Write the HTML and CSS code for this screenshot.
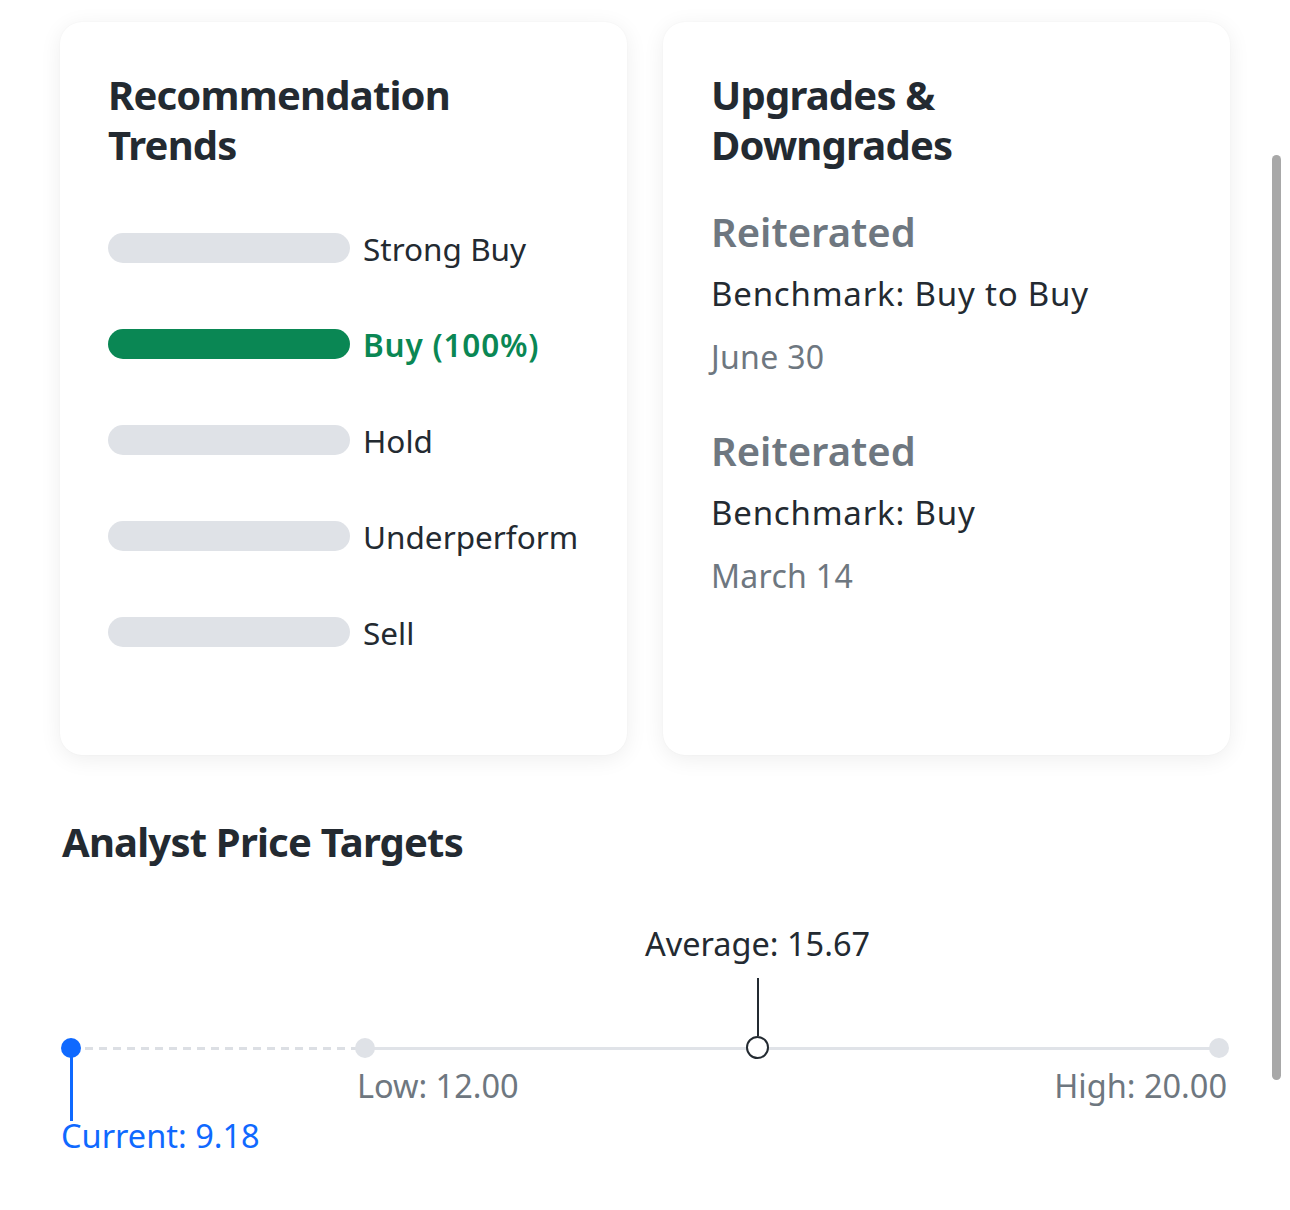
FILE: index.html
```html
<!DOCTYPE html>
<html lang="en">
<head>
  <meta charset="UTF-8">
  <title>Analyst Insights</title>
  <meta name="viewport" content="width=device-width, initial-scale=1.0">
  <link rel="stylesheet" href="styles.css">
</head>
<body>

<div class="page">

  <div class="cards">

    <!-- recommendation trends -->
    <section class="card">
      <h2 class="card-title">Recommendation<br>Trends</h2>

      <div class="trend-list">
        <div class="trend">
          <div class="bar"></div>
          <span class="trend-label">Strong Buy</span>
        </div>
        <div class="trend active">
          <div class="bar"></div>
          <span class="trend-label">Buy (100%)</span>
        </div>
        <div class="trend">
          <div class="bar"></div>
          <span class="trend-label">Hold</span>
        </div>
        <div class="trend">
          <div class="bar"></div>
          <span class="trend-label">Underperform</span>
        </div>
        <div class="trend">
          <div class="bar"></div>
          <span class="trend-label">Sell</span>
        </div>
      </div>
    </section>

    <!-- upgrades / downgrades -->
    <section class="card">
      <h2 class="card-title">Upgrades &amp;<br>Downgrades</h2>

      <div class="grade">
        <div class="grade-action">Reiterated</div>
        <div class="grade-firm">Benchmark: Buy to Buy</div>
        <div class="grade-date">June 30</div>
      </div>
      <div class="grade">
        <div class="grade-action">Reiterated</div>
        <div class="grade-firm">Benchmark: Buy</div>
        <div class="grade-date">March 14</div>
      </div>
    </section>

  </div>

  <!-- price targets -->
  <h2 class="section-title">Analyst Price Targets</h2>

  <div class="targets">
    <div class="scale">
      <div class="line-dashed" style="width: 25.6%"></div>
      <div class="line-solid" style="left: 25.6%"></div>

      <div class="marker current" style="left: 0%">
        <div class="dot"></div>
        <div class="stem"></div>
        <div class="tag">Current: 9.18</div>
      </div>

      <div class="marker low" style="left: 25.6%">
        <div class="dot"></div>
        <div class="tag">Low: 12.00</div>
      </div>

      <div class="marker average" style="left: 59.8%">
        <div class="tag">Average: 15.67</div>
        <div class="stem"></div>
        <div class="ring"></div>
      </div>

      <div class="marker high" style="left: 100%">
        <div class="dot"></div>
        <div class="tag">High: 20.00</div>
      </div>
    </div>
  </div>

</div>

<div class="scrollbar"></div>

</body>
</html>
```

FILE: styles.css
```css
body {
  margin: 0;
  background: #fff;
  color: #232a31;
  font-family: "Noto Sans", "Open Sans", Arial, sans-serif;
}

.page {
  padding: 22px 60px 40px;
}

.cards {
  display: grid;
  grid-template-columns: 1fr 1fr;
  gap: 36px;
}

.card {
  background: #fff;
  border-radius: 22px;
  padding: 48px 48px 75px;
  box-shadow: 0 4px 22px rgba(0, 0, 0, 0.07), 0 0 2px rgba(0, 0, 0, 0.04);
}

.card-title, .section-title {
  margin: 0;
  font-size: 40px;
  line-height: 50px;
  font-weight: 700;
  letter-spacing: -0.8px;
}

/* =========================
   TRENDS
   ========================= */
.trend-list {
  margin-top: 30px;
}

.trend {
  display: flex;
  align-items: center;
  height: 96px;
}

.bar {
  width: 242px;
  height: 30px;
  border-radius: 15px;
  background: #dfe2e7;
  flex-shrink: 0;
}

.trend-label {
  margin-left: 13px;
  font-size: 31.5px;
}

.trend.active .bar { background: #0a8754; }
.trend.active .trend-label {
  color: #0a8754;
  font-weight: 600;
  letter-spacing: 0.8px;
}

/* =========================
   UPGRADES
   ========================= */
.grade {
  margin-top: 37px;
}

.grade + .grade {
  margin-top: 49px;
}

.grade-action {
  font-size: 40px;
  line-height: 50px;
  font-weight: 600;
  color: #6e7780;
}

.grade-firm {
  margin-top: 17px;
  font-size: 33px;
  line-height: 40px;
  letter-spacing: 0.8px;
}

.grade-date {
  margin-top: 23px;
  font-size: 32px;
  line-height: 40px;
  letter-spacing: 0.3px;
  color: #6e7780;
}

/* =========================
   PRICE TARGETS
   ========================= */
.section-title {
  margin-top: 62px;
  margin-left: 2px;
}

.targets {
  padding: 0 11px;
  margin-top: 34px;
}

.scale {
  position: relative;
  height: 280px;
}

.line-dashed {
  position: absolute;
  left: 0;
  top: 146px;
  height: 3px;
  background: repeating-linear-gradient(to right, #dcdfe4 0 8px, transparent 8px 14px);
}

.line-solid {
  position: absolute;
  right: 0;
  top: 146px;
  height: 3px;
  background: #e0e3e8;
}

.marker {
  position: absolute;
  top: 0;
  width: 0;
  height: 100%;
}

.dot {
  position: absolute;
  top: 137px;
  left: -10px;
  width: 20px;
  height: 20px;
  border-radius: 50%;
  background: #dfe2e7;
}

.tag {
  position: absolute;
  font-size: 32.5px;
  line-height: 40px;
  white-space: nowrap;
  color: #6e7780;
}

.current .dot { background: #0f69ff; }
.current .stem {
  position: absolute;
  left: -1.5px;
  top: 147px;
  width: 3px;
  height: 73px;
  background: #0f69ff;
}
.current .tag {
  left: -10px;
  top: 215px;
  color: #0f69ff;
}

.low .tag {
  left: -8px;
  top: 165px;
}

.high .tag {
  right: -8px;
  top: 165px;
}

.average .tag {
  top: 23px;
  left: 0;
  transform: translateX(-50%);
  color: #232a31;
}
.average .stem {
  position: absolute;
  left: -1px;
  top: 77px;
  width: 2.5px;
  height: 58px;
  background: #232a31;
}
.average .ring {
  position: absolute;
  left: -12px;
  top: 135px;
  width: 19px;
  height: 19px;
  border: 2.5px solid #232a31;
  border-radius: 50%;
  background: #fff;
}

.scrollbar {
  position: fixed;
  top: 155px;
  right: 9px;
  width: 9px;
  height: 925px;
  border-radius: 5px;
  background: #a8a8a8;
}
```
